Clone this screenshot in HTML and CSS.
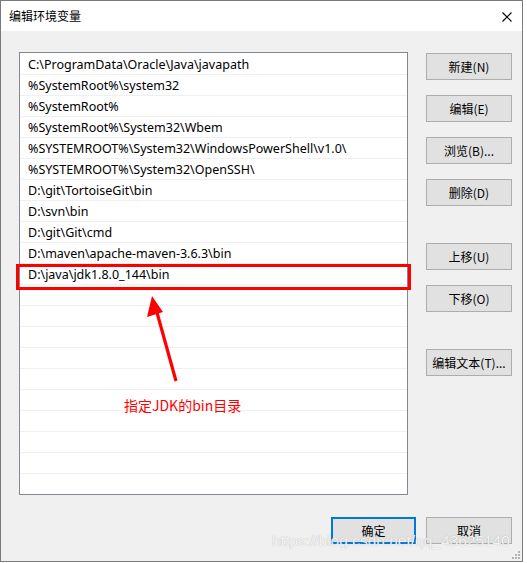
FILE: index.html
```html
<!DOCTYPE html>
<html>
<head>
<meta charset="utf-8">
<link rel="stylesheet" href="styles.css">
</head>
<body>
<div class="window">
  <div class="titlebar">
    <span class="title">编辑环境变量</span>
    <svg class="close" width="10" height="10" viewBox="0 0 10 10"><path d="M0.5 0.5 L9.5 9.5 M9.5 0.5 L0.5 9.5" stroke="#000" stroke-width="1.1" fill="none"/></svg>
  </div>
  <div class="body">
    <div class="main">
      <div class="list">
        <div class="row">C:\ProgramData\Oracle\Java\javapath</div>
        <div class="row">%SystemRoot%\system32</div>
        <div class="row">%SystemRoot%</div>
        <div class="row">%SystemRoot%\System32\Wbem</div>
        <div class="row">%SYSTEMROOT%\System32\WindowsPowerShell\v1.0\</div>
        <div class="row">%SYSTEMROOT%\System32\OpenSSH\</div>
        <div class="row">D:\git\TortoiseGit\bin</div>
        <div class="row">D:\svn\bin</div>
        <div class="row">D:\git\Git\cmd</div>
        <div class="row">D:\maven\apache-maven-3.6.3\bin</div>
        <div class="row">D:\java\jdk1.8.0_144\bin</div>
        <div class="row"></div><div class="row"></div><div class="row"></div><div class="row"></div>
        <div class="row"></div><div class="row"></div><div class="row"></div><div class="row"></div>
        <div class="row"></div><div class="row"></div>
      </div>
      <div class="side">
        <div class="group">
          <button class="btn">新建(N)</button>
          <button class="btn">编辑(E)</button>
          <button class="btn">浏览(B)...</button>
          <button class="btn">删除(D)</button>
        </div>
        <div class="group g2">
          <button class="btn">上移(U)</button>
          <button class="btn">下移(O)</button>
        </div>
        <div class="group g3">
          <button class="btn">编辑文本(T)...</button>
        </div>
      </div>
    </div>
    <div class="footer">
      <button class="btn ok">确定</button>
      <button class="btn">取消</button>
    </div>
  </div>
  <div class="redbox"></div>
  <svg class="arrow" width="40" height="90" viewBox="0 0 40 90">
    <path d="M34 86 L14 14" stroke="#ff0000" stroke-width="3.2" fill="none"/>
    <path d="M10 1 L5 22 L21 17 Z" fill="#ff0000"/>
  </svg>
  <div class="note">指定JDK的bin目录</div>
  <div class="watermark">https://blog.csdn.net/qq_43625140</div>
  <svg class="grip" width="8" height="8" viewBox="0 0 8 8">
    <rect x="6" y="0" width="2" height="2" fill="#b4b4b4"/>
    <rect x="3" y="3" width="2" height="2" fill="#b4b4b4"/>
    <rect x="6" y="3" width="2" height="2" fill="#b4b4b4"/>
    <rect x="0" y="6" width="2" height="2" fill="#b4b4b4"/>
    <rect x="3" y="6" width="2" height="2" fill="#b4b4b4"/>
    <rect x="6" y="6" width="2" height="2" fill="#b4b4b4"/>
  </svg>
</div>
</body>
</html>
```

FILE: styles.css
```css
html, body {
  margin: 0;
  padding: 0;
  background: #ffffff;
}
body {
  font-family: "Noto Sans", "Noto Sans CJK SC", sans-serif;
  font-size: 12px;
  color: #000;
}
.window {
  position: relative;
  width: 521px;
  height: 560px;
  border: 1px solid #7a7a7a;
  background: #f0f0f0;
  display: flex;
  flex-direction: column;
  overflow: hidden;
}
.titlebar {
  height: 30px;
  background: #ffffff;
  display: flex;
  align-items: center;
  justify-content: space-between;
  padding: 0 10px 0 8px;
}
.title {
  font-family: "Noto Sans CJK SC", sans-serif;
  font-size: 12px;
  margin-top: -1px;
}
.close {
  margin-top: 1px;
}
.body {
  flex: 1;
  display: flex;
  flex-direction: column;
  padding: 21px 10px 0 18px;
}
.main {
  display: flex;
  gap: 18px;
}
.list {
  width: 387px;
  height: 440px;
  border: 1px solid #828790;
  background: #ffffff;
  padding-top: 1px;
  box-sizing: content-box;
  overflow: hidden;
}
.row {
  height: 20px;
  line-height: 22px;
  border-bottom: 1px solid #f0f0f0;
  padding-left: 8px;
  white-space: nowrap;
  font-size: 12.5px;
}
.side {
  display: flex;
  flex-direction: column;
  padding-top: 1px;
}
.group {
  display: flex;
  flex-direction: column;
  gap: 15px;
}
.g2 { margin-top: 37px; }
.g3 { margin-top: 37px; }
.btn {
  width: 86px;
  height: 27px;
  background: #e1e1e1;
  border: 1px solid #adadad;
  font-family: "Noto Sans CJK SC", sans-serif;
  font-size: 12px;
  color: #000;
  padding: 0;
  margin: 0;
  display: flex;
  align-items: center;
  justify-content: center;
}
.footer {
  display: flex;
  justify-content: flex-end;
  gap: 10px;
  margin-top: 22px;
}
.btn.ok {
  width: 85px;
  border: 2px solid #0078d7;
}
.redbox {
  position: absolute;
  left: 15px;
  top: 263px;
  width: 389px;
  height: 20px;
  border: 3px solid #ff0000;
}
.arrow {
  position: absolute;
  left: 141px;
  top: 294px;
}
.note {
  position: absolute;
  left: 123px;
  top: 394px;
  color: #ff0000;
  font-family: "Noto Sans CJK SC", sans-serif;
  font-size: 14px;
}
.watermark {
  position: absolute;
  left: 271px;
  top: 531px;
  font-family: "Liberation Sans", sans-serif;
  font-size: 15.5px;
  color: rgba(255,255,255,0.9);
  text-shadow: 0 0 1px rgba(110,110,110,0.6);
}
.grip {
  position: absolute;
  right: 2px;
  bottom: 2px;
}
```
